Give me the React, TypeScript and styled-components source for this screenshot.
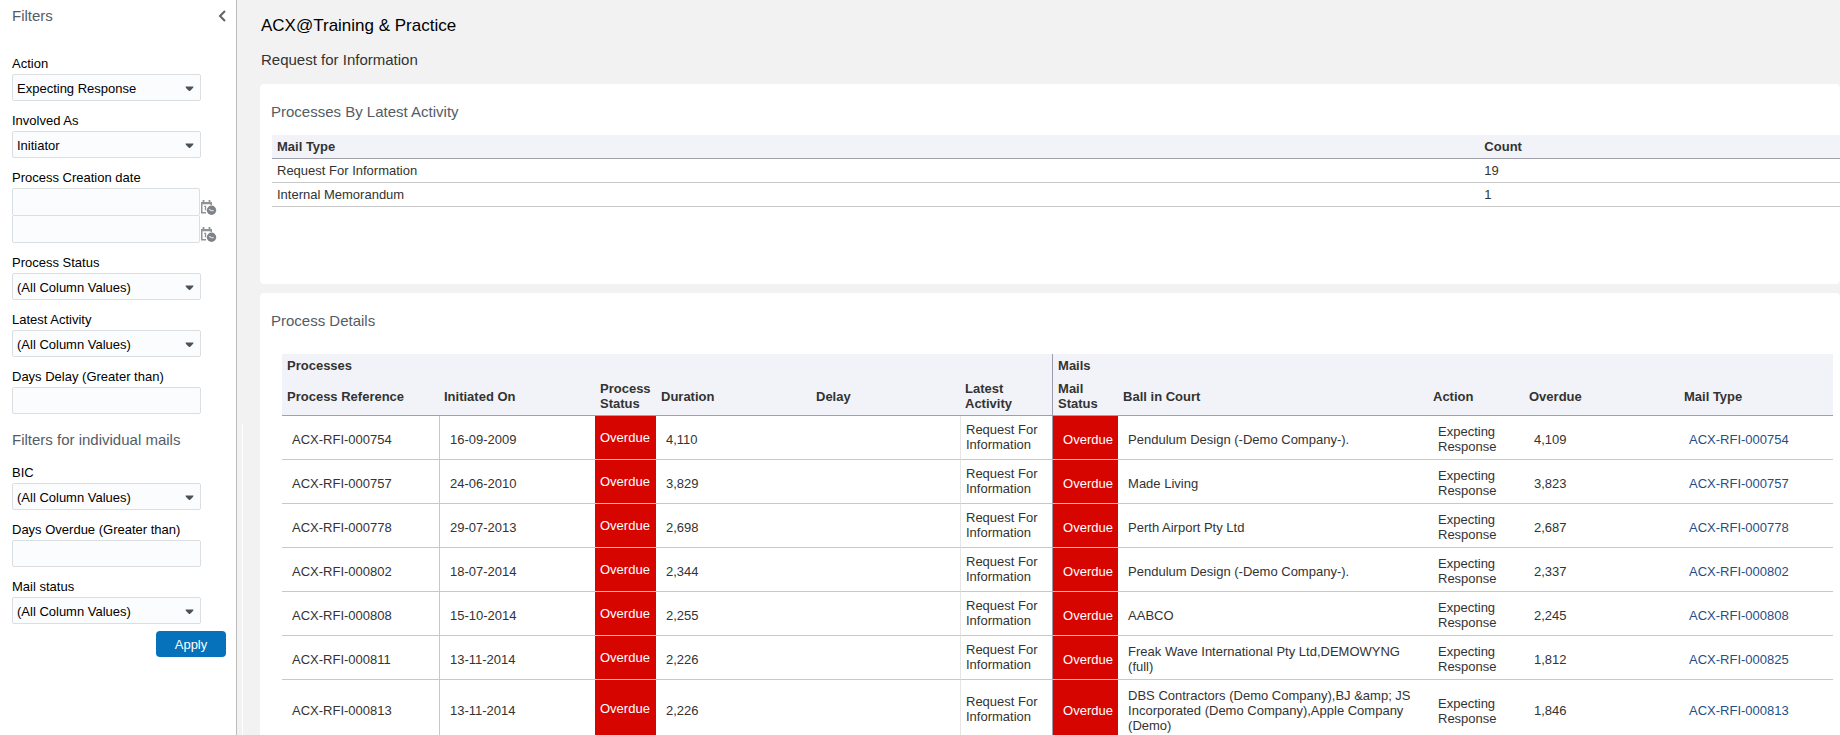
import React, { useId } from "react";
import styled, { createGlobalStyle, css } from "styled-components";

const GlobalStyle = createGlobalStyle`
  *, *::before, *::after { box-sizing: border-box; }
  body {
    margin: 0;
    background: #f2f2f2;
    color: #333;
    font-family: "Liberation Sans", Arial, sans-serif;
    font-size: 13px;
    line-height: 15px;
  }
  button, input, select { font: inherit; margin: 0; }
`;

const Layout = styled.div`
  display: flex;
  height: 100vh;
`;

/* Filter panel */

const Sidebar = styled.aside`
  flex: none;
  width: 237px;
  padding: 7px 10px 10px 12px;
  background: #fff;
  border-right: 1px solid #bdbdbd;
  overflow: auto;
  scrollbar-width: none;
`;

const Splitter = styled.div`
  flex: none;
  width: 6px;
  margin-top: 424px;
  border-right: 1px solid #fff;
`;

const SidebarHead = styled.div`
  display: flex;
  justify-content: space-between;
  align-items: center;
  margin-bottom: 31px;
`;

const Heading = styled.h2`
  margin: 0;
  font-size: 15px;
  line-height: 18px;
  font-weight: 400;
  color: #545c66;
`;

const IconButton = styled.button`
  display: flex;
  padding: 0;
  border: 0;
  background: none;
  color: #5f6266;
  cursor: pointer;
`;

const FieldGroup = styled.div`
  display: flex;
  flex-direction: column;
  gap: 12px;
  margin-bottom: 17px;
`;

const MailFieldGroup = styled(FieldGroup)`
  margin: 16px 0 7px;
`;

const Field = styled.div`
  display: flex;
  flex-direction: column;
  gap: 3px;
  width: 189px;
  color: #000;
`;

const controlStyle = css`
  height: 27px;
  border: 1px solid #dcdfe2;
  border-radius: 2px;
  background: #fbfcfe;
  color: #000;
  outline-offset: -1px;
`;

const TextInput = styled.input`
  ${controlStyle}
  width: 100%;
  padding: 1px 4px 0;
`;

const SelectBox = styled.div`
  position: relative;
  display: flex;
`;

const Select = styled.select`
  ${controlStyle}
  width: 100%;
  padding: 1px 22px 0 4px;
  appearance: none;
`;

const Caret = styled.svg`
  position: absolute;
  top: 12px;
  right: 7px;
  pointer-events: none;
`;

const DateRow = styled.div`
  display: flex;
  align-items: flex-end;
  gap: 1px;
  width: 205px;
  & + & { margin-top: -4px; }
`;

const DateInput = styled(TextInput)`
  height: 28px;
  width: 188px;
`;

const ApplyRow = styled.div`
  display: flex;
  justify-content: flex-end;
`;

const ApplyButton = styled.button`
  width: 70px;
  height: 26px;
  padding: 0;
  border: 0;
  border-radius: 4px;
  background: #0572bb;
  color: #fff;
  cursor: pointer;
`;

/* Report area */

const Main = styled.main`
  flex: 1;
  min-width: 0;
  padding: 16px 0 0 17px;
  overflow: auto;
  scrollbar-width: none;
`;

const PageHeader = styled.header`
  padding: 0 0 15px 1px;
`;

const PageTitle = styled.h1`
  margin: 0 0 15px;
  font-size: 17px;
  line-height: 20px;
  font-weight: 400;
  color: #000;
`;

const PageSubtitle = styled.p`
  margin: 0;
  font-size: 15px;
  line-height: 18px;
`;

const Card = styled.section`
  padding: 19px 0 12px 11px;
  background: #fff;
  border-radius: 4px;
`;

const SummaryCard = styled(Card)`
  min-height: 200px;
  margin-bottom: 9px;
`;

const Table = styled.table`
  width: 100%;
  border-collapse: separate;
  border-spacing: 0;
  table-layout: fixed;
  th {
    background: #f2f3f8;
    text-align: left;
    font-weight: 700;
  }
`;

const SummaryTableArea = styled.div`
  padding: 14px 0 0 1px;
`;

const SummaryTable = styled(Table)`
  th, td { padding: 4px 5px; border-bottom: 1px solid #c8c8c8; }
  th { border-bottom-color: #a0a0aa; }
`;

const DetailTableArea = styled.div`
  padding: 24px 7px 0 11px;
`;

const GroupHead = styled.th<{ $divided?: boolean }>`
  padding: 4px 5px 3px;
  border-left: ${(p) => (p.$divided ? "1px solid #9a9bab" : "0")};
`;

const ColumnHead = styled.th<{ $divided?: boolean }>`
  padding: 5px 2px 4px 5px;
  border-bottom: 1px solid #9f9fae;
  border-left: ${(p) => (p.$divided ? "1px solid #9a9bab" : "0")};
`;

const Cell = styled.td<{ $line?: string; $overdue?: boolean }>`
  padding: 8px 4px 5px 10px;
  border-bottom: 1px solid #c8c8c8;
  border-left: ${(p) => (p.$line ? `1px solid ${p.$line}` : "0")};
  ${(p) => p.$overdue && css`background: #d60500; color: #fff;`}
`;

const CompactCell = styled(Cell)`
  padding: 6px 5px 7px;
`;

const MailLink = styled.a`
  color: #1f4f86;
  text-decoration: none;
`;

const ChevronIcon = () => (
  <svg width="8" height="14" viewBox="0 0 8 14" fill="none" stroke="currentColor" strokeWidth="2" aria-hidden="true">
    <path d="M7 2 2 7l5 5" />
  </svg>
);

const CalendarClockIcon = () => (
  <svg width="16" height="16" viewBox="0 0 16 16" aria-hidden="true">
    <path d="M0 2h11v3H9.500V4.300H1.500V12H5V13.500H0z" fill="#909396" />
    <path d="M2.500 0v3M8.500 0v3" stroke="#909396" strokeWidth="1.800" />
    <path d="M3.200 6.300h1.300v4" stroke="#909396" strokeWidth="1.300" fill="none" />
    <circle cx="10.500" cy="10.300" r="4.700" fill="#7f8387" />
    <path d="M8 9.300l2.300 1.300h2.400" stroke="#d4d6d8" strokeWidth="1.100" fill="none" />
  </svg>
);

function SelectField({ label, value }: { label: string; value: string }) {
  const id = useId();
  return (
    <Field>
      <label htmlFor={id}>{label}</label>
      <SelectBox>
        <Select id={id} defaultValue={value}>
          <option>{value}</option>
        </Select>
        <Caret width="9" height="6" viewBox="0 0 9 6" aria-hidden="true">
          <path d="M.5.500h8Q8.500 1.500 7 3L5.200 4.800Q4.500 5.400 3.800 4.800L2 3Q.5 1.500.5.500z" fill="#4c5157" />
        </Caret>
      </SelectBox>
    </Field>
  );
}

function TextField({ label }: { label: string }) {
  const id = useId();
  return (
    <Field>
      <label htmlFor={id}>{label}</label>
      <TextInput id={id} type="text" />
    </Field>
  );
}

function DateRangeField({ label }: { label: string }) {
  const id = useId();
  return (
    <Field>
      <label htmlFor={id}>{label}</label>
      <DateRow>
        <DateInput id={id} type="text" />
        <IconButton type="button" aria-label="Pick start date"><CalendarClockIcon /></IconButton>
      </DateRow>
      <DateRow>
        <DateInput type="text" aria-label={`${label} to`} />
        <IconButton type="button" aria-label="Pick end date"><CalendarClockIcon /></IconButton>
      </DateRow>
    </Field>
  );
}

const ANY = "(All Column Values)";

const summary = [
  { type: "Request For Information", count: 19 },
  { type: "Internal Memorandum", count: 1 },
];

/* The "Ball in Court" column has no width and takes the space left over. */
const columns: { name: string; width?: number; divided?: boolean }[] = [
  { name: "Process Reference", width: 157 },
  { name: "Initiated On", width: 156 },
  { name: "Process Status", width: 61 },
  { name: "Duration", width: 155 },
  { name: "Delay", width: 149 },
  { name: "Latest Activity", width: 92 },
  { name: "Mail Status", width: 66, divided: true },
  { name: "Ball in Court" },
  { name: "Action", width: 96 },
  { name: "Overdue", width: 155 },
  { name: "Mail Type", width: 154 },
];

const processes = [
  { ref: "ACX-RFI-000754", date: "16-09-2009", duration: "4,110", court: "Pendulum Design (-Demo Company-).", overdue: "4,109", mail: "ACX-RFI-000754" },
  { ref: "ACX-RFI-000757", date: "24-06-2010", duration: "3,829", court: "Made Living", overdue: "3,823", mail: "ACX-RFI-000757" },
  { ref: "ACX-RFI-000778", date: "29-07-2013", duration: "2,698", court: "Perth Airport Pty Ltd", overdue: "2,687", mail: "ACX-RFI-000778" },
  { ref: "ACX-RFI-000802", date: "18-07-2014", duration: "2,344", court: "Pendulum Design (-Demo Company-).", overdue: "2,337", mail: "ACX-RFI-000802" },
  { ref: "ACX-RFI-000808", date: "15-10-2014", duration: "2,255", court: "AABCO", overdue: "2,245", mail: "ACX-RFI-000808" },
  { ref: "ACX-RFI-000811", date: "13-11-2014", duration: "2,226", court: "Freak Wave International Pty Ltd,DEMOWYNG (full)", overdue: "1,812", mail: "ACX-RFI-000825" },
  { ref: "ACX-RFI-000813", date: "13-11-2014", duration: "2,226", court: "DBS Contractors (Demo Company),BJ &amp; JS Incorporated (Demo Company),Apple Company (Demo)", overdue: "1,846", mail: "ACX-RFI-000813" },
];

export default function App() {
  return (
    <>
      <GlobalStyle />
      <Layout>
        <Sidebar>
          <SidebarHead>
            <Heading>Filters</Heading>
            <IconButton type="button" aria-label="Collapse filters"><ChevronIcon /></IconButton>
          </SidebarHead>
          <FieldGroup>
            <SelectField label="Action" value="Expecting Response" />
            <SelectField label="Involved As" value="Initiator" />
            <DateRangeField label="Process Creation date" />
            <SelectField label="Process Status" value={ANY} />
            <SelectField label="Latest Activity" value={ANY} />
            <TextField label="Days Delay (Greater than)" />
          </FieldGroup>
          <Heading>Filters for individual mails</Heading>
          <MailFieldGroup>
            <SelectField label="BIC" value={ANY} />
            <TextField label="Days Overdue (Greater than)" />
            <SelectField label="Mail status" value={ANY} />
          </MailFieldGroup>
          <ApplyRow>
            <ApplyButton type="button">Apply</ApplyButton>
          </ApplyRow>
        </Sidebar>
        <Splitter />
        <Main>
          <PageHeader>
            <PageTitle>ACX@Training &amp; Practice</PageTitle>
            <PageSubtitle>Request for Information</PageSubtitle>
          </PageHeader>

          <SummaryCard>
            <Heading>Processes By Latest Activity</Heading>
            <SummaryTableArea>
              <SummaryTable>
                <colgroup>
                  <col width="77%" />
                  <col />
                </colgroup>
                <thead>
                  <tr>
                    <th scope="col">Mail Type</th>
                    <th scope="col">Count</th>
                  </tr>
                </thead>
                <tbody>
                  {summary.map((s) => (
                    <tr key={s.type}>
                      <td>{s.type}</td>
                      <td>{s.count}</td>
                    </tr>
                  ))}
                </tbody>
              </SummaryTable>
            </SummaryTableArea>
          </SummaryCard>

          <Card>
            <Heading>Process Details</Heading>
            <DetailTableArea>
              <Table>
                <colgroup>
                  {columns.map((c) => <col key={c.name} width={c.width} />)}
                </colgroup>
                <thead>
                  <tr>
                    <GroupHead colSpan={6} scope="colgroup">Processes</GroupHead>
                    <GroupHead colSpan={5} scope="colgroup" $divided>Mails</GroupHead>
                  </tr>
                  <tr>
                    {columns.map((c) => (
                      <ColumnHead key={c.name} scope="col" $divided={c.divided}>{c.name}</ColumnHead>
                    ))}
                  </tr>
                </thead>
                <tbody>
                  {processes.map((p) => (
                    <tr key={p.ref}>
                      <Cell>{p.ref}</Cell>
                      <Cell $line="#c8c8c8">{p.date}</Cell>
                      <CompactCell $overdue>Overdue</CompactCell>
                      <Cell>{p.duration}</Cell>
                      <Cell />
                      <CompactCell $line="#e6e6e6">Request For Information</CompactCell>
                      <Cell $line="#9a9bab" $overdue>Overdue</Cell>
                      <Cell>{p.court}</Cell>
                      <Cell>Expecting Response</Cell>
                      <Cell>{p.overdue}</Cell>
                      <Cell><MailLink href="#">{p.mail}</MailLink></Cell>
                    </tr>
                  ))}
                </tbody>
              </Table>
            </DetailTableArea>
          </Card>
        </Main>
      </Layout>
    </>
  );
}
